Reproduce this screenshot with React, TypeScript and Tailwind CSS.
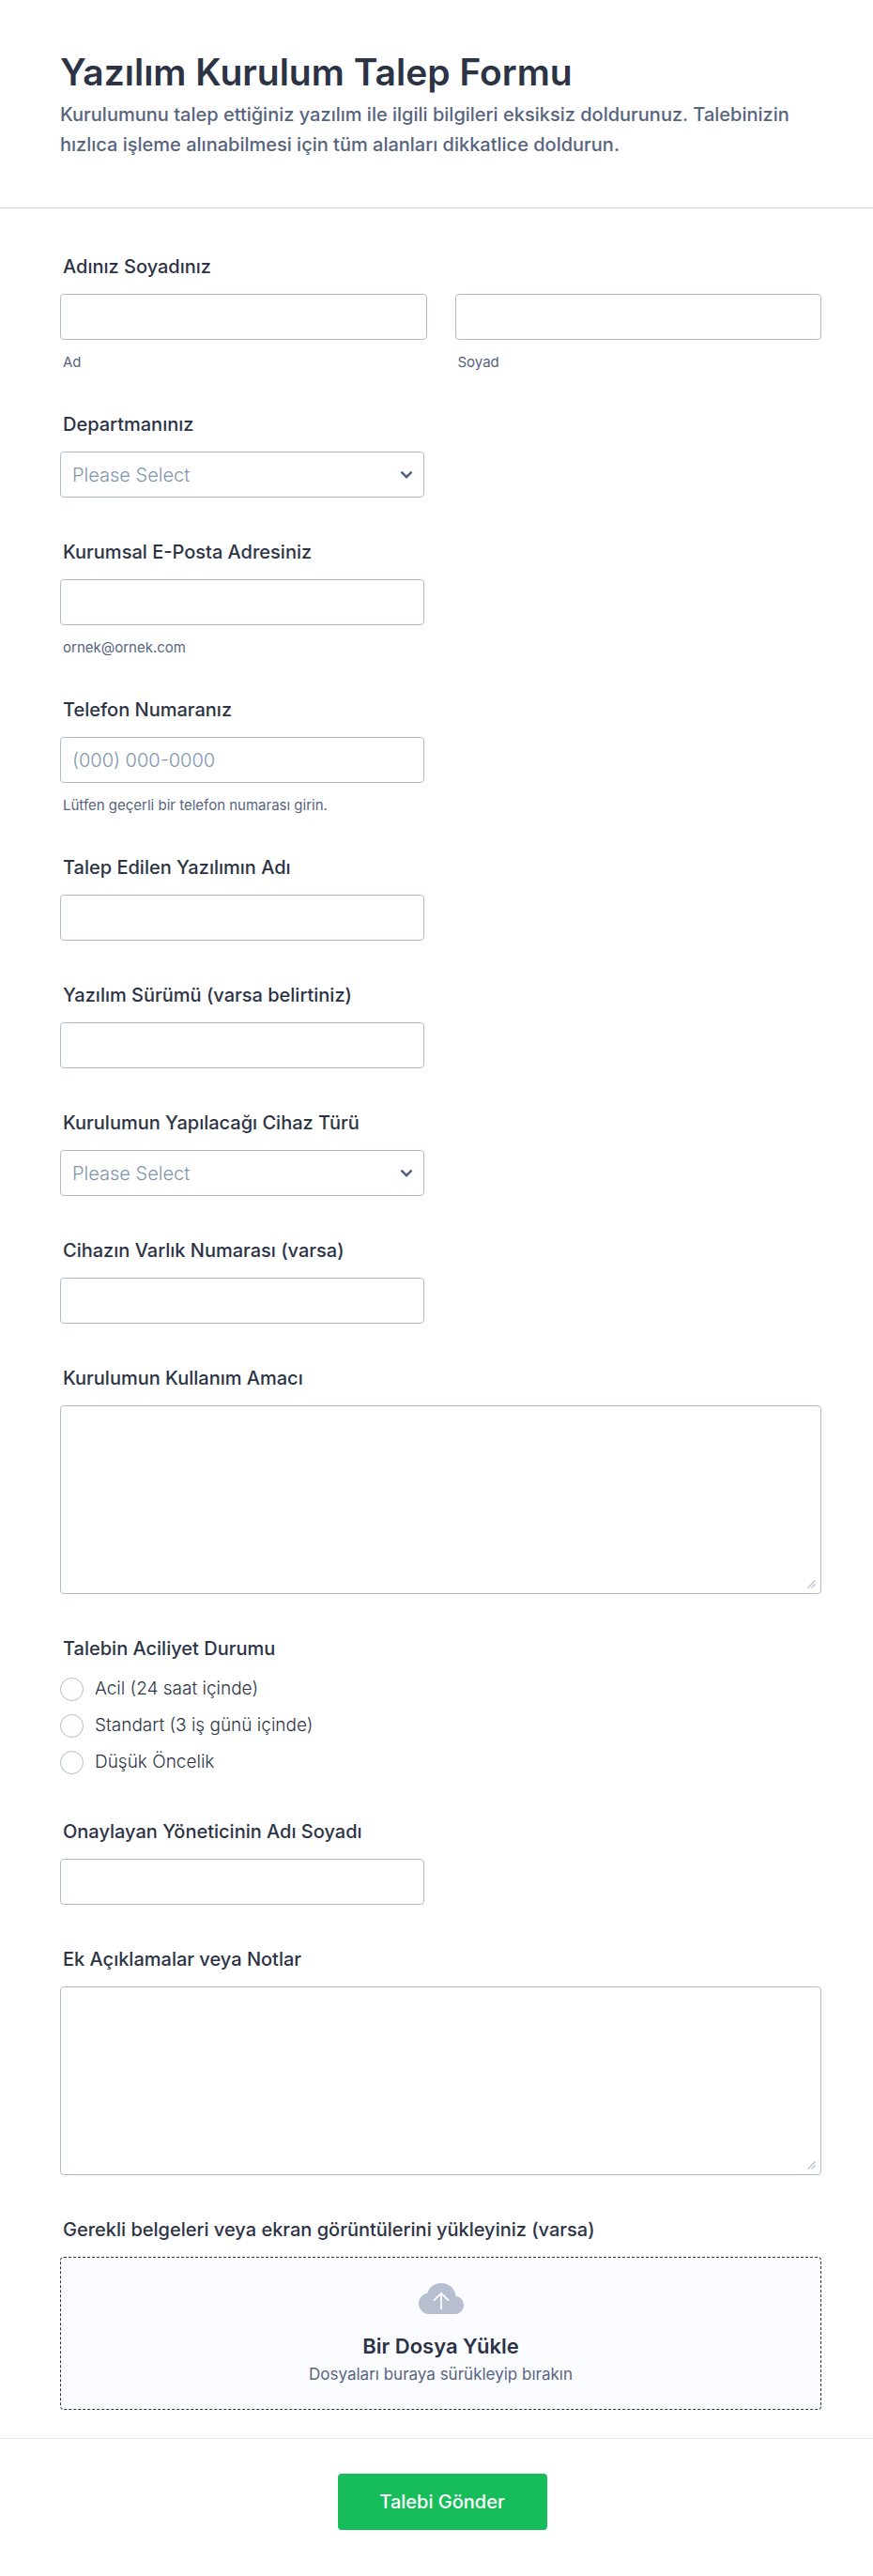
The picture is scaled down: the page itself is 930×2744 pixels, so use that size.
import React from "react";

const inputStyle =
  "block h-[49px] w-full rounded border border-[#b3bacb] bg-white px-3 text-[20px] font-light text-[#2c3345] placeholder:text-[#8295ae] focus:outline-2 focus:outline-[#4277ff]";

const labelStyle = "mb-[17px] block pl-[3px] text-[20px] leading-6 font-medium";

const hintStyle = "mt-4 pl-[3px] text-[15px] leading-4 text-[#57647e]";

type FieldProps = {
  id: string;
  label: string;
  hint?: string;
  children: React.ReactNode;
};

const Field = ({ id, label, hint, children }: FieldProps) => {
  return (
    <div className="mb-[46px]">
      <label htmlFor={id} className={labelStyle}>
        {label}
      </label>
      {children}
      {hint && (
        <p id={`${id}-hint`} className={hintStyle}>
          {hint}
        </p>
      )}
    </div>
  );
};

type TextFieldProps = {
  id: string;
  label: string;
  hint?: string;
  type?: string;
  placeholder?: string;
};

const TextField = ({
  id,
  label,
  hint,
  type = "text",
  placeholder,
}: TextFieldProps) => {
  return (
    <Field id={id} label={label} hint={hint}>
      <div className="max-w-[388px]">
        <input
          id={id}
          name={id}
          type={type}
          placeholder={placeholder}
          aria-describedby={hint ? `${id}-hint` : undefined}
          className={inputStyle}
        />
      </div>
    </Field>
  );
};

type SelectFieldProps = {
  id: string;
  label: string;
  options: string[];
};

const SelectField = ({ id, label, options }: SelectFieldProps) => {
  return (
    <Field id={id} label={label}>
      <div className="relative max-w-[388px]">
        <select
          id={id}
          name={id}
          defaultValue=""
          className="block h-[49px] w-full appearance-none rounded border border-[#b3bacb] bg-white px-3 text-[20px] font-light text-[#8295ae]"
        >
          <option value="">Please Select</option>
          {options.map((option) => (
            <option key={option} value={option}>
              {option}
            </option>
          ))}
        </select>
        <svg
          viewBox="0 0 14 10"
          fill="none"
          aria-hidden="true"
          className="pointer-events-none absolute top-5 right-3 h-[10px] w-[14px]"
        >
          <path
            d="M2.2 2.4L7 7.1l4.8-4.7"
            stroke="#535f82"
            strokeWidth="2.6"
            strokeLinecap="round"
          />
        </svg>
      </div>
    </Field>
  );
};

const TextAreaField = ({ id, label }: { id: string; label: string }) => {
  return (
    <Field id={id} label={label}>
      <div className="relative">
        <textarea
          id={id}
          name={id}
          className="block h-[201px] w-full resize-none rounded border border-[#b3bacb] bg-white p-3 text-[20px] font-light"
        />
        <svg
          viewBox="0 0 9 9"
          fill="none"
          aria-hidden="true"
          className="pointer-events-none absolute right-1.5 bottom-1.5 size-[9px]"
        >
          <path
            d="M0.500 8.500l8-8M4.500 8.500l4-4"
            stroke="#b5c0d0"
            strokeWidth="1.300"
          />
        </svg>
      </div>
    </Field>
  );
};

const urgencies = [
  { id: "acil", label: "Acil (24 saat içinde)" },
  { id: "standart", label: "Standart (3 iş günü içinde)" },
  { id: "dusuk", label: "Düşük Öncelik" },
];

const App = () => {
  return (
    <form className="bg-white font-['Inter',sans-serif] text-[#2c3345]">
      <header className="border-b border-[#cfd5e0] pt-[53px] pr-[55px] pb-[51px] pl-16">
        <h1 className="text-[39px] leading-[48px] font-semibold">
          Yazılım Kurulum Talep Formu
        </h1>
        <p className="mt-[5px] text-[20px] leading-8 font-medium text-[#57647e]">
          Kurulumunu talep ettiğiniz yazılım ile ilgili bilgileri eksiksiz
          doldurunuz. Talebinizin hızlıca işleme alınabilmesi için tüm alanları
          dikkatlice doldurun.
        </p>
      </header>

      <div className="pt-[50px] pr-[55px] pb-[30px] pl-16">
        <fieldset className="mb-[46px]">
          <legend className={labelStyle}>Adınız Soyadınız</legend>
          <div className="grid grid-cols-2 gap-[30px]">
            <div className="flex flex-col">
              <input id="ad" name="ad" type="text" className={inputStyle} />
              <label htmlFor="ad" className={hintStyle}>
                Ad
              </label>
            </div>
            <div className="flex flex-col">
              <input
                id="soyad"
                name="soyad"
                type="text"
                className={inputStyle}
              />
              <label htmlFor="soyad" className={hintStyle}>
                Soyad
              </label>
            </div>
          </div>
        </fieldset>

        <SelectField
          id="departman"
          label="Departmanınız"
          options={["Bilgi İşlem", "İnsan Kaynakları", "Muhasebe", "Satış"]}
        />
        <TextField
          id="eposta"
          type="email"
          label="Kurumsal E-Posta Adresiniz"
          hint="ornek@ornek.com"
        />
        <TextField
          id="telefon"
          type="tel"
          label="Telefon Numaranız"
          placeholder="(000) 000-0000"
          hint="Lütfen geçerli bir telefon numarası girin."
        />
        <TextField id="yazilim" label="Talep Edilen Yazılımın Adı" />
        <TextField id="surum" label="Yazılım Sürümü (varsa belirtiniz)" />
        <SelectField
          id="cihaz"
          label="Kurulumun Yapılacağı Cihaz Türü"
          options={["Masaüstü", "Dizüstü", "Sunucu"]}
        />
        <TextField id="varlik" label="Cihazın Varlık Numarası (varsa)" />
        <TextAreaField id="amac" label="Kurulumun Kullanım Amacı" />

        <fieldset className="mb-[46px]">
          <legend className={labelStyle}>Talebin Aciliyet Durumu</legend>
          <div className="flex flex-col gap-[11px] pb-0.5">
            {urgencies.map((urgency) => (
              <div key={urgency.id} className="flex h-7 items-center gap-3">
                <input
                  id={urgency.id}
                  name="aciliyet"
                  type="radio"
                  value={urgency.id}
                  className="size-[25px] shrink-0 appearance-none rounded-full border border-[#b3bacb] bg-white checked:border-8 checked:border-[#2e69ff]"
                />
                <label
                  htmlFor={urgency.id}
                  className="text-[19px] leading-6 font-light"
                >
                  {urgency.label}
                </label>
              </div>
            ))}
          </div>
        </fieldset>

        <TextField id="yonetici" label="Onaylayan Yöneticinin Adı Soyadı" />
        <TextAreaField id="notlar" label="Ek Açıklamalar veya Notlar" />

        <p id="dosya-baslik" className={labelStyle}>
          Gerekli belgeleri veya ekran görüntülerini yükleyiniz (varsa)
        </p>
        <label
          htmlFor="dosya"
          className="relative flex flex-col items-center rounded border border-dashed border-[#2c3345] bg-[#fbfcff] pt-[27px] pb-[25px]"
        >
          <svg
            viewBox="0 0 48 33"
            fill="none"
            aria-hidden="true"
            className="h-[33px] w-12"
          >
            <path
              d="M11 33C5 33 0 28 0 22c0-5.800 4-10.600 9.200-11C10.700 4.500 16.800 0 24 0c8 0 14.700 5.700 15.700 13.800C44.300 14.700 48 18.600 48 23.400 48 28.700 43.700 33 38.400 33H11z"
              fill="#b6bed0"
            />
            <path
              d="M24 28V11M16 18.500l8-7.700 8 7.700"
              stroke="#fbfcff"
              strokeWidth="1.800"
            />
          </svg>
          <span className="mt-5 text-[22px] leading-7 font-semibold">
            Bir Dosya Yükle
          </span>
          <span className="mt-1 text-[17px] leading-6 text-[#57647e]">
            Dosyaları buraya sürükleyip bırakın
          </span>
          <input
            id="dosya"
            name="dosya"
            type="file"
            aria-describedby="dosya-baslik"
            className="sr-only"
          />
        </label>
      </div>

      <footer className="flex justify-center border-t border-[#e6eaf3] pt-[37px] pr-9 pb-[49px] pl-12">
        <button
          type="submit"
          className="h-[60px] min-w-[223px] rounded bg-[#18bd5b] px-5 text-[20px] font-medium text-white"
        >
          Talebi Gönder
        </button>
      </footer>
    </form>
  );
};

export default App;
